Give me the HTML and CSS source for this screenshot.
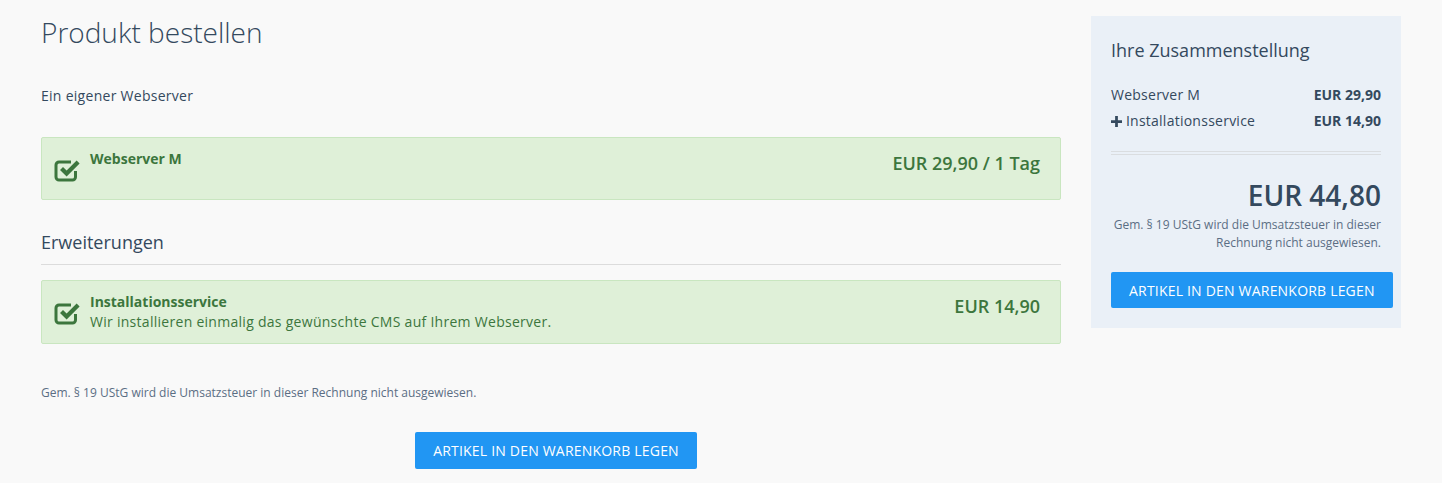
FILE: index.html
```html
<!DOCTYPE html>
<html lang="de">
<head>
  <meta charset="UTF-8" />
  <title>Produkt bestellen</title>
  <link rel="stylesheet" href="styles.css">
</head>
<body>
  <div class="page">
    <main class="main">
      <h1>Produkt bestellen</h1>
      <p class="lead">Ein eigener Webserver</p>

      <!-- Base product -->
      <div class="option first">
        <svg class="check" viewBox="0 0 28 28" width="28" height="28">
          <path d="M21.5 15v6a3 3 0 0 1-3 3H5a3 3 0 0 1-3-3V9a3 3 0 0 1 3-3h12" fill="none" stroke="currentColor" stroke-width="3"/>
          <path d="M6 14l3-3 3.6 3.6 10-10 3 3-13 13z" fill="currentColor"/>
        </svg>
        <div class="option-text">
          <div class="option-title">Webserver M</div>
        </div>
        <div class="option-price">EUR 29,90 / 1 Tag</div>
      </div>

      <h2>Erweiterungen</h2>

      <div class="option">
        <svg class="check" viewBox="0 0 28 28" width="28" height="28">
          <path d="M21.5 15v6a3 3 0 0 1-3 3H5a3 3 0 0 1-3-3V9a3 3 0 0 1 3-3h12" fill="none" stroke="currentColor" stroke-width="3"/>
          <path d="M6 14l3-3 3.6 3.6 10-10 3 3-13 13z" fill="currentColor"/>
        </svg>
        <div class="option-text">
          <div class="option-title">Installationsservice</div>
          <div class="option-desc">Wir installieren einmalig das gewünschte CMS auf Ihrem Webserver.</div>
        </div>
        <div class="option-price">EUR 14,90</div>
      </div>

      <p class="note">Gem. § 19 UStG wird die Umsatzsteuer in dieser Rechnung nicht ausgewiesen.</p>

      <div class="actions">
        <button class="btn">Artikel in den Warenkorb legen</button>
      </div>
    </main>

    <aside class="summary">
      <h3>Ihre Zusammenstellung</h3>
      <div class="line">
        <span>Webserver M</span>
        <strong>EUR 29,90</strong>
      </div>
      <div class="line">
        <span><svg class="plus" viewBox="0 0 12 12" width="11" height="11"><path d="M4.5 0h3v4.5H12v3H7.5V12h-3V7.5H0v-3h4.5z" fill="currentColor"/></svg> Installationsservice</span>
        <strong>EUR 14,90</strong>
      </div>
      <div class="divider"></div>
      <div class="total">EUR 44,80</div>
      <p class="summary-note">Gem. § 19 UStG wird die Umsatzsteuer in dieser Rechnung nicht ausgewiesen.</p>
      <button class="btn">Artikel in den Warenkorb legen</button>
    </aside>
  </div>
</body>
</html>
```

FILE: styles.css
```css
body {
  margin: 0;
  background: #f9f9f9;
  font-family: 'Open Sans', sans-serif;
  font-size: 14px;
  color: #34495e;
}

.page {
  display: flex;
  align-items: flex-start;
  gap: 30px;
  padding: 16px 41px 0 41px;
}

.main {
  width: 1020px;
}

h1 {
  font-size: 28px;
  font-weight: 300;
  margin: 0;
  line-height: 32px;
}

.lead {
  margin: 38px 0 0;
  line-height: 20px;
  letter-spacing: 0.28px;
}

.option {
  display: flex;
  align-items: flex-start;
  margin-top: 20px;
  padding: 11px 20px 11px 12px;
  min-height: 39px;
  background: #dff0d8;
  border: 1px solid #c9e6c0;
  border-radius: 2px;
  color: #3c763d;
}

.option.first {
  margin-top: 31px;
}

.check {
  margin: 7px 8px 0 0;
  flex: none;
}

.option-text {
  flex: 1;
  line-height: 20px;
}

.option-title {
  font-weight: bold;
}

.option-desc {
  letter-spacing: 0.28px;
}

.option-price {
  font-size: 18px;
  font-weight: 600;
  margin-top: 2px;
}

h2 {
  font-size: 18px;
  font-weight: normal;
  margin: 30px 0 0;
  padding-bottom: 10px;
  line-height: 24px;
  border-bottom: 1px solid #dcdcdc;
}

h2 + .option {
  margin-top: 15px;
}

.note {
  font-size: 12px;
  color: #5b6e84;
  margin: 40px 0 0;
  line-height: 18px;
}

.actions {
  text-align: center;
  margin-top: 30px;
  padding-left: 10px;
}

.btn {
  font-family: 'Open Sans', sans-serif;
  font-size: 14px;
  text-transform: uppercase;
  letter-spacing: 0.2px;
  white-space: nowrap;
  color: #fff;
  background: #2196f3;
  border: none;
  border-radius: 2px;
  height: 37px;
  padding: 0 18px;
  cursor: pointer;
}

.summary {
  width: 270px;
  background: #eaf0f7;
  padding: 20px;
}

h3 {
  font-size: 18px;
  font-weight: normal;
  margin: 2px 0 0;
  line-height: 24px;
}

.line {
  display: flex;
  justify-content: space-between;
  line-height: 26px;
}

.line span {
  letter-spacing: 0.25px;
}

h3 + .line {
  margin-top: 20px;
}

.plus {
  vertical-align: -1px;
}

.divider {
  margin-top: 17px;
  border-top: 1px solid #dadde0;
  border-bottom: 1px solid #dadde0;
  height: 2px;
}

.total {
  text-align: right;
  font-size: 28px;
  font-weight: 600;
  line-height: 36px;
  margin-top: 22px;
}

.summary-note {
  text-align: right;
  font-size: 12px;
  color: #5b6e84;
  line-height: 18px;
  margin: 3px 0 0;
}

.summary .btn {
  display: block;
  margin-top: 20px;
  height: 36px;
}
```
